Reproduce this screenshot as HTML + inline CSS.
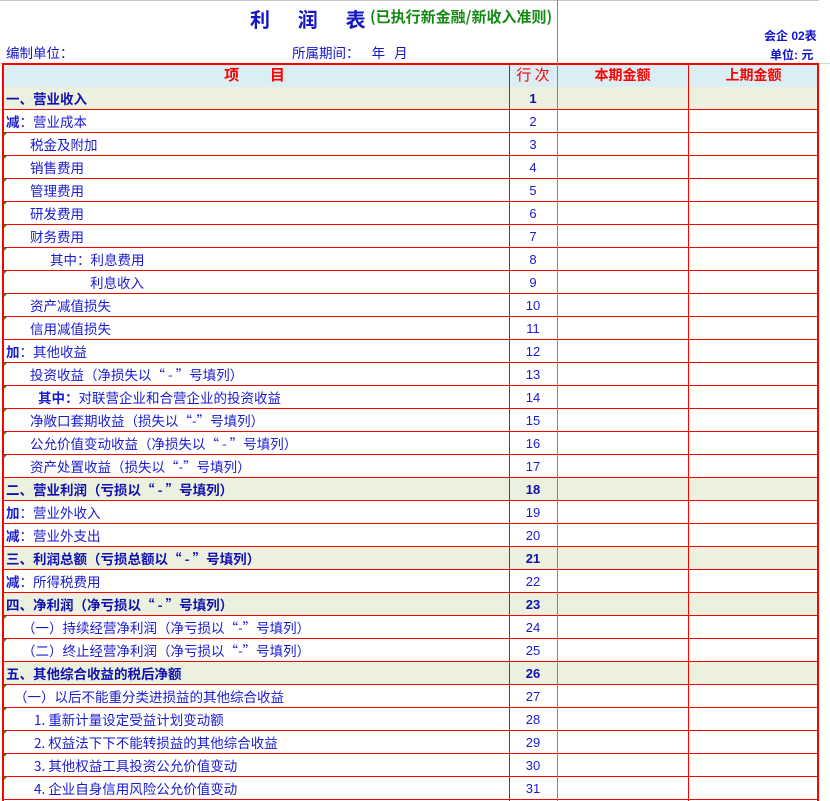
<!DOCTYPE html>
<html><head><meta charset="utf-8"><style>
body{margin:0;width:830px;height:801px;overflow:hidden;background:#fff;position:relative;font-family:"Liberation Sans","Noto Sans CJK SC",sans-serif;color:#1a1ad0;}
.a{position:absolute;white-space:nowrap;}
.r{position:absolute;left:3px;width:816px;height:22px;border-bottom:1px solid #f00;}
.r .t{position:absolute;top:0;line-height:23px;font-size:13.5px;font-family:"Noto Sans CJK SC","Liberation Sans",sans-serif;}
.r .n{position:absolute;left:506px;width:48px;text-align:center;line-height:23px;font-size:13px;}
.b{background:#ebf1de;}
.b .t,.b .n{font-weight:bold;color:#1010b0;}
.g{position:absolute;left:0;top:0;width:0;height:0;border-top:4px solid #2a8a2a;border-right:4px solid transparent;}
</style></head><body>
<div class="a" style="left:0;top:0;width:830px;height:1px;background:#c8c8c8"></div>
<div class="a" style="left:557px;top:0;width:1px;height:801px;background:#4caf50"></div>
<div class="a" style="left:818px;top:86px;width:12px;height:1px;background:#4caf50"></div>
<div class="a" style="left:250px;top:4px;font-size:20px;font-weight:bold;color:#1414c8;">利&nbsp;&nbsp;&nbsp;&nbsp;&nbsp;润&nbsp;&nbsp;&nbsp;&nbsp;&nbsp;表</div>
<div class="a" style="left:370px;top:6px;font-size:15px;font-weight:bold;color:#138a13;font-family:'Noto Sans CJK SC',sans-serif">(已执行新金融/新收入准则)</div>
<div class="a" style="left:764px;top:27px;font-size:12px;font-weight:bold;color:#1414c8">会企 02表</div>
<div class="a" style="left:6px;top:42px;font-size:13.5px;color:#1414c8;font-family:'Noto Sans CJK SC',sans-serif">编制单位：</div>
<div class="a" style="left:292px;top:42px;font-size:13.5px;color:#1414c8;font-family:'Noto Sans CJK SC',sans-serif">所属期间：&nbsp;&nbsp;&nbsp;&nbsp;年&nbsp;&nbsp;&nbsp;月</div>
<div class="a" style="left:770px;top:46px;font-size:12px;font-weight:bold;color:#1414c8">单位: 元</div>
<div class="a" style="left:2px;top:63px;width:815px;height:22px;background:#daeef3;border:2px solid #f00;"></div>
<div class="a" style="left:0;top:65px;width:509px;text-align:center;font-size:15px;font-weight:bold;color:#f00;line-height:20px;font-family:'Noto Sans CJK SC',sans-serif">项&nbsp;&nbsp;&nbsp;&nbsp;&nbsp;&nbsp;&nbsp;&nbsp;&nbsp;目</div>
<div class="a" style="left:509px;top:65px;width:48px;text-align:center;font-size:15px;color:#f00;line-height:20px;font-family:'Noto Sans CJK SC',sans-serif">行 次</div>
<div class="a" style="left:557px;top:65px;width:131px;text-align:center;font-size:14px;font-weight:bold;color:#f00;line-height:20px;font-family:'Noto Sans CJK SC',sans-serif">本期金额</div>
<div class="a" style="left:688px;top:65px;width:131px;text-align:center;font-size:14px;font-weight:bold;color:#f00;line-height:20px;font-family:'Noto Sans CJK SC',sans-serif">上期金额</div>
<div id="rows"></div>
<div class="a" style="left:2px;top:86px;width:2px;height:715px;background:#f00"></div>
<div class="a" style="left:817px;top:63px;width:2px;height:738px;background:#f00"></div>
<div class="a" style="left:509px;top:63px;width:1px;height:738px;background:#f00"></div>
<div class="a" style="left:688px;top:63px;width:1px;height:738px;background:#f00"></div>
<div class="a" style="left:557px;top:63px;width:1px;height:738px;background:#4caf50"></div>
<div class="a" style="left:819px;top:0;width:11px;height:801px;background:#fff"></div>
<div class="a" style="left:819px;top:63px;width:11px;height:1px;background:#d4d4d4"></div>
<script>
var R=[
[1,"一、营业收入",6,1],[2,"<b>减</b>：营业成本",6,0],[3,"税金及附加",30,0],[4,"销售费用",30,0],[5,"管理费用",30,0],[6,"研发费用",30,0],[7,"财务费用",30,0],[8,"其中：利息费用",50,0],[9,"利息收入",90,0],[10,"资产减值损失",30,0],[11,"信用减值损失",30,0],[12,"<b>加</b>：其他收益",6,0],[13,"投资收益（净损失以“ - ”号填列）",30,0],[14,"<b>其中：</b>对联营企业和合营企业的投资收益",38,0],[15,"净敞口套期收益（损失以“-”号填列）",30,0],[16,"公允价值变动收益（净损失以“ - ”号填列）",30,0],[17,"资产处置收益（损失以“-”号填列）",30,0],[18,"二、营业利润（亏损以“ - ”号填列）",6,1],[19,"<b>加</b>：营业外收入",6,0],[20,"<b>减</b>：营业外支出",6,0],[21,"三、利润总额（亏损总额以“ - ”号填列）",6,1],[22,"<b>减</b>：所得税费用",6,0],[23,"四、净利润（净亏损以“ - ”号填列）",6,1],[24,"（一）持续经营净利润（净亏损以“-”号填列）",22,0],[25,"（二）终止经营净利润（净亏损以“-”号填列）",22,0],[26,"五、其他综合收益的税后净额",6,1],[27,"（一）以后不能重分类进损益的其他综合收益",14,0],[28,"1. 重新计量设定受益计划变动额",34,0],[29,"2. 权益法下下不能转损益的其他综合收益",34,0],[30,"3. 其他权益工具投资公允价值变动",34,0],[31,"4. 企业自身信用风险公允价值变动",34,0]];
var h="";R.forEach(function(r,i){var top=87+23*i;var gr=(r[3]==0&&r[2]>6)?'<div class="g"></div>':'';
h+='<div class="r'+(r[3]?' b':'')+'" style="top:'+top+'px">'+gr+'<div class="t" style="left:'+(r[2]-3)+'px">'+r[1]+'</div><div class="n">'+r[0]+'</div></div>';});
document.getElementById("rows").innerHTML=h;
</script>
</body></html>
